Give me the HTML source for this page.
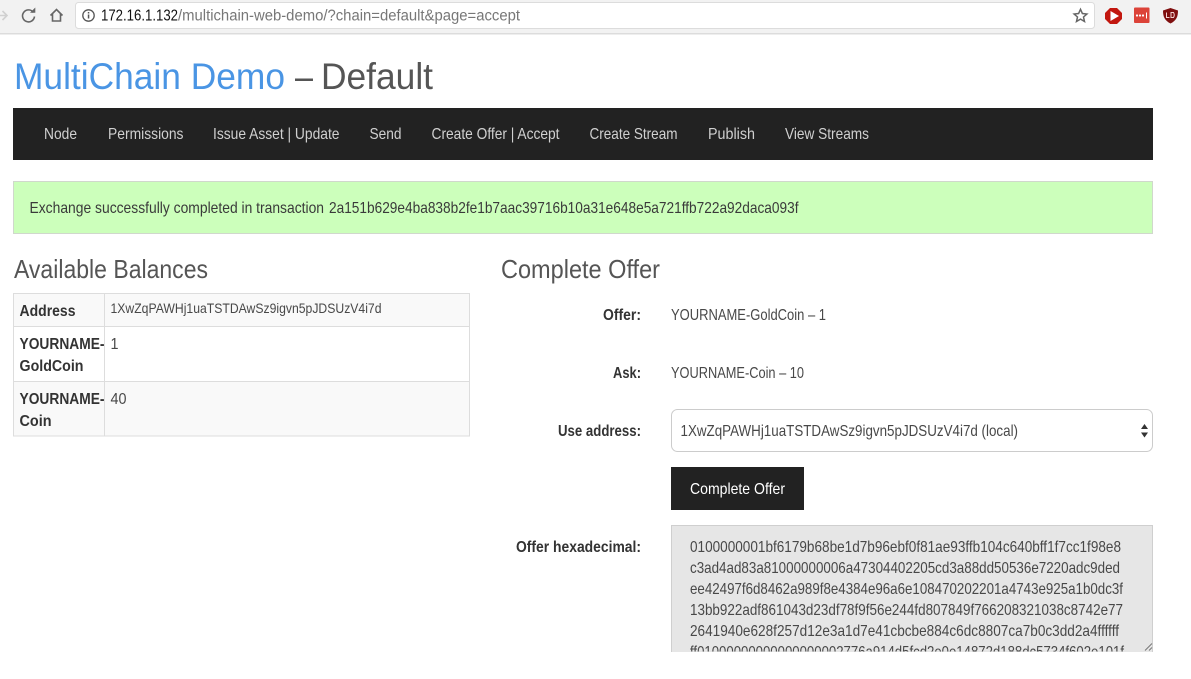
<!DOCTYPE html>
<html lang="en">
<head>
<meta charset="utf-8">
<title>MultiChain Demo</title>
<style>
html,body{margin:0;padding:0;background:#fff;width:1191px;height:679px;overflow:hidden}
svg{display:block}
text{font-family:"Liberation Sans",sans-serif;white-space:pre}
.b{font-size:16px;fill:#3a3a3a}
.n{font-size:16px;fill:#d0d0d0}
.l{font-size:16px;fill:#333;font-weight:bold}
.h{font-size:26px;fill:#555}
.x{font-size:16px;fill:#484848}
</style>
</head>
<body>
<svg width="1191" height="679" viewBox="0 0 1191 679" xmlns="http://www.w3.org/2000/svg">
<rect width="1191" height="679" fill="#fff"/>
<!-- browser bar -->
<rect width="1191" height="33" fill="#f2f2f2"/>
<rect y="33" width="1191" height="1.5" fill="#dcdcdc"/>
<rect x="75.500" y="2.500" width="1019" height="26" rx="3" fill="#fff" stroke="#dcdcdc"/>
<path d="M-2 15.500H6M2.500 11l4.500 4.500-4.500 4.500" fill="none" stroke="#d0d0d0" stroke-width="1.600"/>
<path d="M33.500 12.500A6 6 0 1 0 34.500 16.500" fill="none" stroke="#666" stroke-width="1.600"/>
<path d="M30 12.800h5.300V7.500z" fill="#666"/>
<path d="M50.500 15.500L56.500 9.500l6 6M52.500 14v7h8v-7" fill="none" stroke="#666" stroke-width="1.600"/>
<circle cx="88.500" cy="15.500" r="5.700" fill="none" stroke="#555" stroke-width="1.300"/>
<rect x="87.800" y="14.500" width="1.500" height="4" fill="#555"/>
<rect x="87.800" y="12" width="1.500" height="1.500" fill="#555"/>
<text x="101" y="20.500" font-size="15.500" fill="#111" textLength="77" lengthAdjust="spacingAndGlyphs">172.16.1.132</text>
<text x="178" y="20.500" font-size="15.500" fill="#777" textLength="342" lengthAdjust="spacingAndGlyphs">/multichain-web-demo/?chain=default&amp;page=accept</text>
<path d="M1080.500 9.300l1.900 4.200 4.500.5-3.400 3 1 4.500-4-2.400-4 2.400 1-4.500-3.400-3 4.500-.5z" fill="none" stroke="#666" stroke-width="1.500"/>
<path d="M1110 8h7l5 5v6l-5 5h-7l-5-5v-6z" fill="#c2170f"/>
<path d="M1110.500 11l8.500 5-8.500 5z" fill="#fff"/>
<rect x="1134" y="7.500" width="15.500" height="15.500" rx="1" fill="#dc4339"/>
<circle cx="1137" cy="15.500" r="1.100" fill="#fff"/><circle cx="1140" cy="15.500" r="1.100" fill="#fff"/><circle cx="1143" cy="15.500" r="1.100" fill="#fff"/>
<rect x="1146" y="12.500" width="1" height="6" fill="#fff"/>
<path d="M1170.500 8l7.500 2.500c0 6-1.500 10-7.500 13-6-3-7.500-7-7.500-13z" fill="#7f0f0f"/>
<path d="M1166.500 12.500v5h3M1171 12.500v5h2.500q1.500-2.500 0-5z" fill="none" stroke="#f2d0d0" stroke-width="1"/>

<!-- title -->
<text x="14" y="89" font-size="37" fill="#4a95e4" textLength="271" lengthAdjust="spacingAndGlyphs">MultiChain Demo</text>
<text x="295" y="89" font-size="37" fill="#555" textLength="18" lengthAdjust="spacingAndGlyphs">–</text>
<text x="321" y="89" font-size="37" fill="#555" textLength="112" lengthAdjust="spacingAndGlyphs">Default</text>

<!-- nav -->
<rect x="13" y="108" width="1140" height="52" fill="#222"/>
<text class="n" x="44" y="139" textLength="33" lengthAdjust="spacingAndGlyphs">Node</text>
<text class="n" x="108" y="139" textLength="75.500" lengthAdjust="spacingAndGlyphs">Permissions</text>
<text class="n" x="213" y="139" textLength="126.500" lengthAdjust="spacingAndGlyphs">Issue Asset | Update</text>
<text class="n" x="369.500" y="139" textLength="32" lengthAdjust="spacingAndGlyphs">Send</text>
<text class="n" x="431.500" y="139" textLength="128" lengthAdjust="spacingAndGlyphs">Create Offer | Accept</text>
<text class="n" x="589.500" y="139" textLength="88" lengthAdjust="spacingAndGlyphs">Create Stream</text>
<text class="n" x="708" y="139" textLength="47" lengthAdjust="spacingAndGlyphs">Publish</text>
<text class="n" x="785" y="139" textLength="84" lengthAdjust="spacingAndGlyphs">View Streams</text>

<!-- alert -->
<rect x="13.500" y="181.500" width="1139" height="52" fill="#ccffbb" stroke="#d0d8cc"/>
<text class="b" x="29.500" y="213" textLength="294.500" lengthAdjust="spacingAndGlyphs">Exchange successfully completed in transaction</text>
<text class="b" x="329" y="213" textLength="469.500" lengthAdjust="spacingAndGlyphs">2a151b629e4ba838b2fe1b7aac39716b10a31e648e5a721ffb722a92daca093f</text>

<!-- headings -->
<text class="h" x="14" y="278" textLength="194" lengthAdjust="spacingAndGlyphs">Available Balances</text>
<text class="h" x="501" y="278" textLength="159" lengthAdjust="spacingAndGlyphs">Complete Offer</text>

<!-- table -->
<rect x="14" y="294" width="455" height="32" fill="#f9f9f9"/>
<rect x="14" y="381" width="455" height="55" fill="#f9f9f9"/>
<g fill="none" stroke="#ddd" stroke-width="1">
<rect x="13.500" y="293.500" width="456" height="142.500"/>
<path d="M13.500 326.500H469.500M13.500 381.500H469.500M104.500 293.500V436"/>
</g>
<text class="l" x="19.500" y="316" textLength="56" lengthAdjust="spacingAndGlyphs">Address</text>
<text x="110.500" y="313" font-size="14" fill="#484848" textLength="271" lengthAdjust="spacingAndGlyphs">1XwZqPAWHj1uaTSTDAwSz9igvn5pJDSUzV4i7d</text>
<text class="l" x="19.500" y="349" textLength="85" lengthAdjust="spacingAndGlyphs">YOURNAME-</text>
<text class="l" x="19.500" y="371" textLength="64" lengthAdjust="spacingAndGlyphs">GoldCoin</text>
<text class="x" x="110.500" y="349" textLength="8" lengthAdjust="spacingAndGlyphs">1</text>
<text class="l" x="19.500" y="404" textLength="85" lengthAdjust="spacingAndGlyphs">YOURNAME-</text>
<text class="l" x="19.500" y="426" textLength="32" lengthAdjust="spacingAndGlyphs">Coin</text>
<text class="x" x="110.500" y="404" textLength="16" lengthAdjust="spacingAndGlyphs">40</text>

<!-- form -->
<text class="l" x="603" y="320" textLength="38" lengthAdjust="spacingAndGlyphs">Offer:</text>
<text class="x" x="671" y="320" textLength="155" lengthAdjust="spacingAndGlyphs">YOURNAME-GoldCoin – 1</text>
<text class="l" x="613" y="378" textLength="28" lengthAdjust="spacingAndGlyphs">Ask:</text>
<text class="x" x="671" y="378" textLength="133" lengthAdjust="spacingAndGlyphs">YOURNAME-Coin – 10</text>
<text class="l" x="558" y="436" textLength="83" lengthAdjust="spacingAndGlyphs">Use address:</text>
<rect x="671.500" y="409.500" width="481" height="42" rx="6" fill="#fff" stroke="#ccc"/>
<text class="x" x="680.500" y="436" textLength="337.500" lengthAdjust="spacingAndGlyphs">1XwZqPAWHj1uaTSTDAwSz9igvn5pJDSUzV4i7d (local)</text>
<path d="M1144.500 424l3.500 5h-7zM1144.500 437.500l-3.500-5h7z" fill="#333"/>
<rect x="671" y="467" width="133" height="43" fill="#222"/>
<text x="690" y="494" font-size="16" fill="#fff" textLength="95" lengthAdjust="spacingAndGlyphs">Complete Offer</text>
<text class="l" x="516" y="552" textLength="125" lengthAdjust="spacingAndGlyphs">Offer hexadecimal:</text>

<!-- textarea -->
<rect x="671" y="525" width="482" height="127" fill="#e6e6e6"/>
<path d="M671.500 652V525.500H1152.500V652" fill="none" stroke="#cfcfcf"/>
<svg x="671" y="525" width="482" height="126.500" viewBox="671 525 482 126.500">
<text class="x" x="690" y="552" textLength="431" lengthAdjust="spacingAndGlyphs">0100000001bf6179b68be1d7b96ebf0f81ae93ffb104c640bff1f7cc1f98e8</text>
<text class="x" x="690" y="573" textLength="430" lengthAdjust="spacingAndGlyphs">c3ad4ad83a81000000006a47304402205cd3a88dd50536e7220adc9ded</text>
<text class="x" x="690" y="594" textLength="433" lengthAdjust="spacingAndGlyphs">ee42497f6d8462a989f8e4384e96a6e108470202201a4743e925a1b0dc3f</text>
<text class="x" x="690" y="615" textLength="433" lengthAdjust="spacingAndGlyphs">13bb922adf861043d23df78f9f56e244fd807849f766208321038c8742e77</text>
<text class="x" x="690" y="636" textLength="429" lengthAdjust="spacingAndGlyphs">2641940e628f257d12e3a1d7e41cbcbe884c6dc8807ca7b0c3dd2a4ffffff</text>
<text class="x" x="690" y="657" textLength="434" lengthAdjust="spacingAndGlyphs">ff01000000000000000002776a914d5fcd2e0e14872d188dc5734f602e101f</text>
</svg>
<path d="M1145 650.500l7-7M1149 650.500l3-3" stroke="#777" stroke-width="1" fill="none"/>
</svg>
</body>
</html>
